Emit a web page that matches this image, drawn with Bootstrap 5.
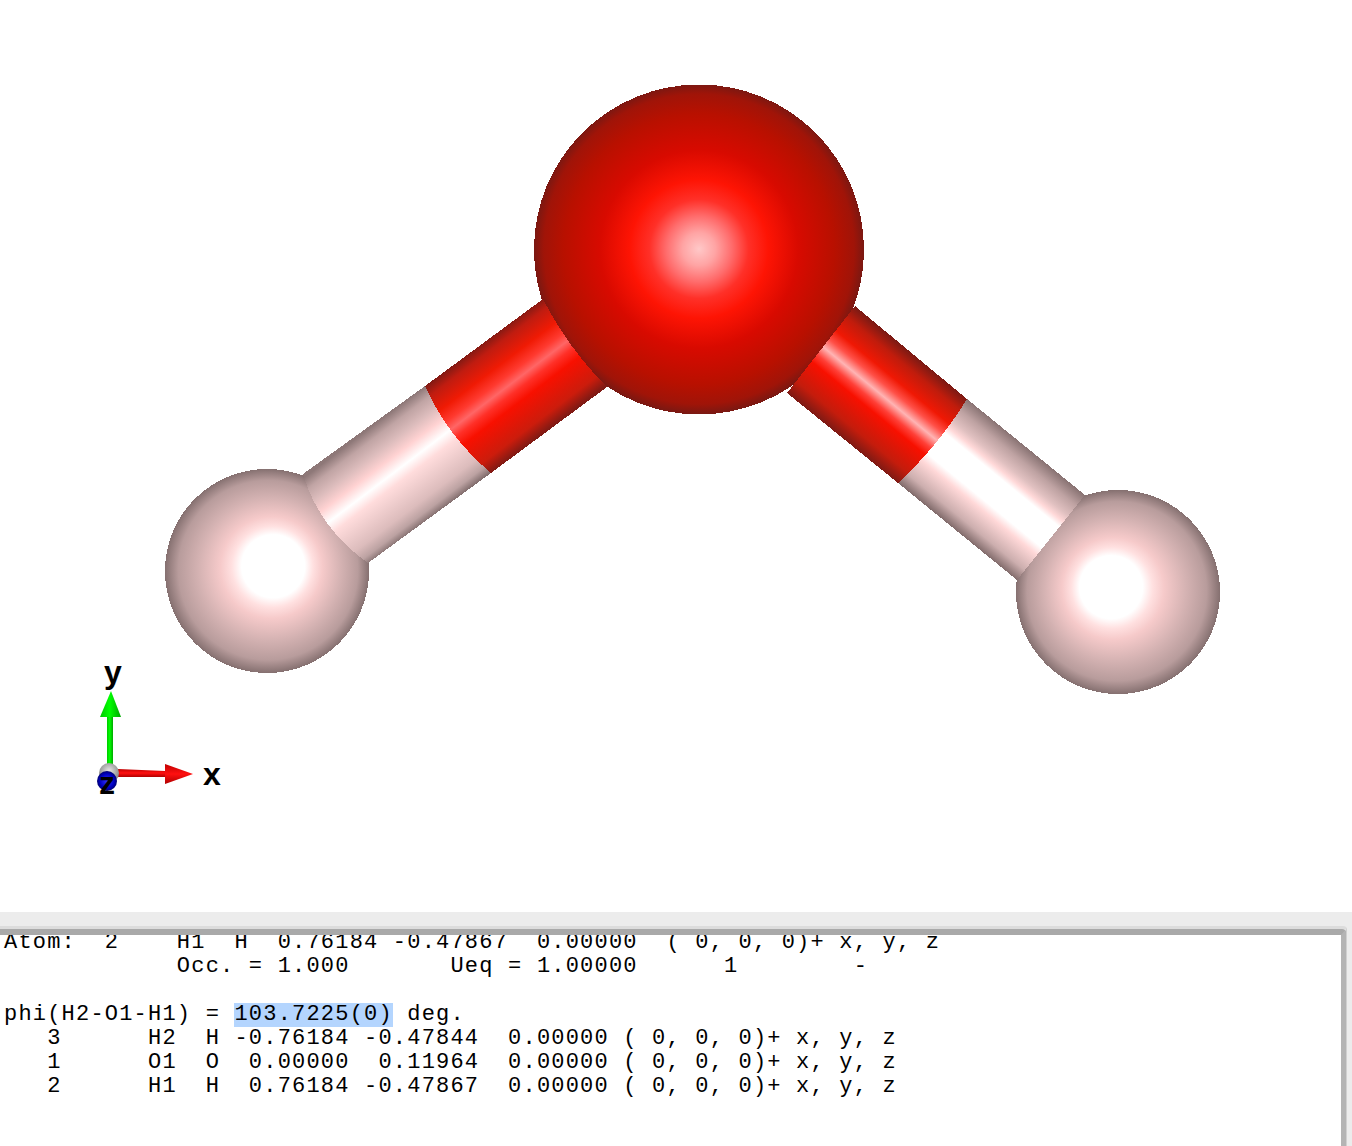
<!DOCTYPE html>
<html lang="en">
<head>
  <meta charset="UTF-8">
  <title>Molecule viewer</title>
  <link href="https://cdn.jsdelivr.net/npm/bootstrap@5.3.2/dist/css/bootstrap.min.css" rel="stylesheet">
  <style>
    body { background: #fff; overflow: hidden; }
    .view-pane { height: 912px; }
    .atom-shape { shape-rendering: crispEdges; }
    .axis-label { font: bold 32px "Liberation Sans", Arial, sans-serif; fill: #000; }
    .console-frame { height: 234px; background: #ececec; padding: 14px 5px 0 0; }
    .console-edge { height: 100%; border-top: 3px solid #dcdcdc; border-right: 1px solid #d0d0d0; border-top-right-radius: 4px; }
    .console-pane { height: 100%; background: #fff; border-top: 6px solid #a9a9a9; border-right: 5px solid #b4b4b4; border-top-right-radius: 4px; overflow: hidden; }
    .console-text { margin: -4px 0 0 4px; font: 22px/24px "Liberation Mono", "Courier New", monospace; letter-spacing: 1.2px; color: #000; overflow: visible; }
    .console-hl { background: #b4d5fe; display: inline-block; height: 24px; }
  </style>
</head>
<body class="m-0">
  <div class="d-flex flex-column">
    <!-- 3D view -->
    <div class="view-pane">
      <svg class="d-block" width="1352" height="912" viewBox="0 0 1352 912" xmlns="http://www.w3.org/2000/svg">
        <defs>
          <radialGradient id="oxygen" gradientUnits="userSpaceOnUse" cx="699" cy="249" r="165">
            <stop offset="0" stop-color="#ffc8c8"/>
            <stop offset=".1" stop-color="#ffa4a4"/>
            <stop offset=".2" stop-color="#ff6c6c"/>
            <stop offset=".3" stop-color="#ff3028"/>
            <stop offset=".42" stop-color="#fe1404"/>
            <stop offset=".6" stop-color="#d80a00"/>
            <stop offset=".82" stop-color="#b81000"/>
            <stop offset=".94" stop-color="#a01408"/>
            <stop offset="1" stop-color="#7a1812"/>
          </radialGradient>
          <radialGradient id="hydrogenL" gradientUnits="userSpaceOnUse" cx="267" cy="571" r="102" fx="276" fy="564">
            <stop offset="0" stop-color="#fff"/>
            <stop offset=".31" stop-color="#fff"/>
            <stop offset=".4" stop-color="#ffe0e0"/>
            <stop offset=".5" stop-color="#f6caca"/>
            <stop offset=".7" stop-color="#d4b2b2"/>
            <stop offset=".88" stop-color="#b89c9c"/>
            <stop offset="1" stop-color="#857070"/>
          </radialGradient>
          <radialGradient id="hydrogenR" gradientUnits="userSpaceOnUse" cx="1118" cy="592" r="102" fx="1108" fy="585">
            <stop offset="0" stop-color="#fff"/>
            <stop offset=".31" stop-color="#fff"/>
            <stop offset=".4" stop-color="#ffe0e0"/>
            <stop offset=".5" stop-color="#f6caca"/>
            <stop offset=".7" stop-color="#d4b2b2"/>
            <stop offset=".88" stop-color="#b89c9c"/>
            <stop offset="1" stop-color="#857070"/>
          </radialGradient>
          <linearGradient id="bondLRed" gradientUnits="userSpaceOnUse" x1="425" y1="386" x2="491" y2="473">
            <stop offset="0" stop-color="#801a14"/>
            <stop offset=".1" stop-color="#c01c10"/>
            <stop offset=".26" stop-color="#f01a04"/>
            <stop offset=".38" stop-color="#ff3a30"/>
            <stop offset=".46" stop-color="#ff6666"/>
            <stop offset=".54" stop-color="#ff3028"/>
            <stop offset=".64" stop-color="#f81000"/>
            <stop offset=".88" stop-color="#cc1c0c"/>
            <stop offset="1" stop-color="#801a14"/>
          </linearGradient>
          <linearGradient id="bondLPink" gradientUnits="userSpaceOnUse" x1="425" y1="386" x2="491" y2="473">
            <stop offset="0" stop-color="#8e7878"/>
            <stop offset=".1" stop-color="#c0a4a4"/>
            <stop offset=".22" stop-color="#dcbcbc"/>
            <stop offset=".34" stop-color="#ffd2d2"/>
            <stop offset=".46" stop-color="#fff"/>
            <stop offset=".56" stop-color="#ffdcdc"/>
            <stop offset=".82" stop-color="#dcbcbc"/>
            <stop offset=".92" stop-color="#bca2a2"/>
            <stop offset="1" stop-color="#7e6a6a"/>
          </linearGradient>
          <linearGradient id="bondRRed" gradientUnits="userSpaceOnUse" x1="967" y1="399" x2="898" y2="483">
            <stop offset="0" stop-color="#7c1a14"/>
            <stop offset=".12" stop-color="#c01c0c"/>
            <stop offset=".28" stop-color="#f01804"/>
            <stop offset=".38" stop-color="#ff5048"/>
            <stop offset=".47" stop-color="#ffb4b4"/>
            <stop offset=".56" stop-color="#ff4038"/>
            <stop offset=".64" stop-color="#f81000"/>
            <stop offset=".87" stop-color="#c41c0c"/>
            <stop offset="1" stop-color="#801a14"/>
          </linearGradient>
          <linearGradient id="bondRPink" gradientUnits="userSpaceOnUse" x1="967" y1="399" x2="898" y2="483">
            <stop offset="0" stop-color="#8a7474"/>
            <stop offset=".12" stop-color="#bea2a2"/>
            <stop offset=".24" stop-color="#e0c0c0"/>
            <stop offset=".31" stop-color="#ffd8d8"/>
            <stop offset=".37" stop-color="#fff"/>
            <stop offset=".62" stop-color="#fff"/>
            <stop offset=".7" stop-color="#ffd8d8"/>
            <stop offset=".88" stop-color="#ccaeae"/>
            <stop offset="1" stop-color="#806a6a"/>
          </linearGradient>
          <linearGradient id="axisGreen" x1="0" x2="1" y1="0" y2="0">
            <stop offset="0" stop-color="#00c800"/>
            <stop offset=".45" stop-color="#00ff00"/>
            <stop offset="1" stop-color="#00a800"/>
          </linearGradient>
          <linearGradient id="axisRed" x1="0" x2="0" y1="0" y2="1">
            <stop offset="0" stop-color="#c00000"/>
            <stop offset=".5" stop-color="#ff1010"/>
            <stop offset="1" stop-color="#b00000"/>
          </linearGradient>
          <radialGradient id="axisGrey" cx=".5" cy=".4" r=".6">
            <stop offset="0" stop-color="#e8e8e8"/>
            <stop offset="1" stop-color="#808080"/>
          </radialGradient>
          <radialGradient id="axisBlue" cx=".5" cy=".5" r=".5">
            <stop offset="0" stop-color="#3030ff"/>
            <stop offset=".7" stop-color="#0000c0"/>
            <stop offset="1" stop-color="#000070"/>
          </radialGradient>
        </defs>

        <g class="atom-shape">
          <circle cx="267" cy="571" r="102" fill="url(#hydrogenL)"/>
          <circle cx="1118" cy="592" r="102" fill="url(#hydrogenR)"/>
          <circle cx="699" cy="249.5" r="165" fill="url(#oxygen)"/>

          <!-- bonds, half of each atom colour -->
          <path d="M303 474 L425 386 Q448 437 491 473 L368 563 Q319 528 303 474 Z" fill="url(#bondLPink)"/>
          <path d="M425 386 L543 299 Q568 348 607 387 L491 473 Q448 437 425 386 Z" fill="url(#bondLRed)"/>
          <path d="M967 399 L1085 495 L1017 580 L898 483 Q938 446 967 399 Z" fill="url(#bondRPink)"/>
          <path d="M855 306 L967 399 Q938 446 898 483 L787 393 Z" fill="url(#bondRRed)"/>
        </g>

        <!-- axes -->
        <rect x="107" y="717" width="6" height="48" fill="url(#axisGreen)"/>
        <polygon points="111,691 100,717 121,717" fill="url(#axisGreen)"/>
        <polygon points="118,769 165,771 165,777 118,777" fill="url(#axisRed)"/>
        <polygon points="165,764 193,774 165,784" fill="url(#axisRed)"/>
        <circle cx="109" cy="773" r="10" fill="url(#axisGrey)"/>
        <circle cx="107" cy="781" r="10" fill="url(#axisBlue)"/>
        <text class="axis-label" x="104" y="683">y</text>
        <text class="axis-label" x="203" y="785">x</text>
        <text class="axis-label" x="99" y="794">z</text>
      </svg>
    </div>

    <!-- output console -->
    <div class="console-frame">
      <div class="console-edge">
        <div class="console-pane">
<pre class="console-text">Atom:  2    H1  H  0.76184 -0.47867  0.00000  ( 0, 0, 0)+ x, y, z
            Occ. = 1.000       Ueq = 1.00000      1        -

phi(H2-O1-H1) = <span class="console-hl">103.7225(0)</span> deg.
   3      H2  H -0.76184 -0.47844  0.00000 ( 0, 0, 0)+ x, y, z
   1      O1  O  0.00000  0.11964  0.00000 ( 0, 0, 0)+ x, y, z
   2      H1  H  0.76184 -0.47867  0.00000 ( 0, 0, 0)+ x, y, z
</pre>
        </div>
      </div>
    </div>
  </div>

  <script src="https://cdn.jsdelivr.net/npm/bootstrap@5.3.2/dist/js/bootstrap.bundle.min.js"></script>
</body>
</html>
